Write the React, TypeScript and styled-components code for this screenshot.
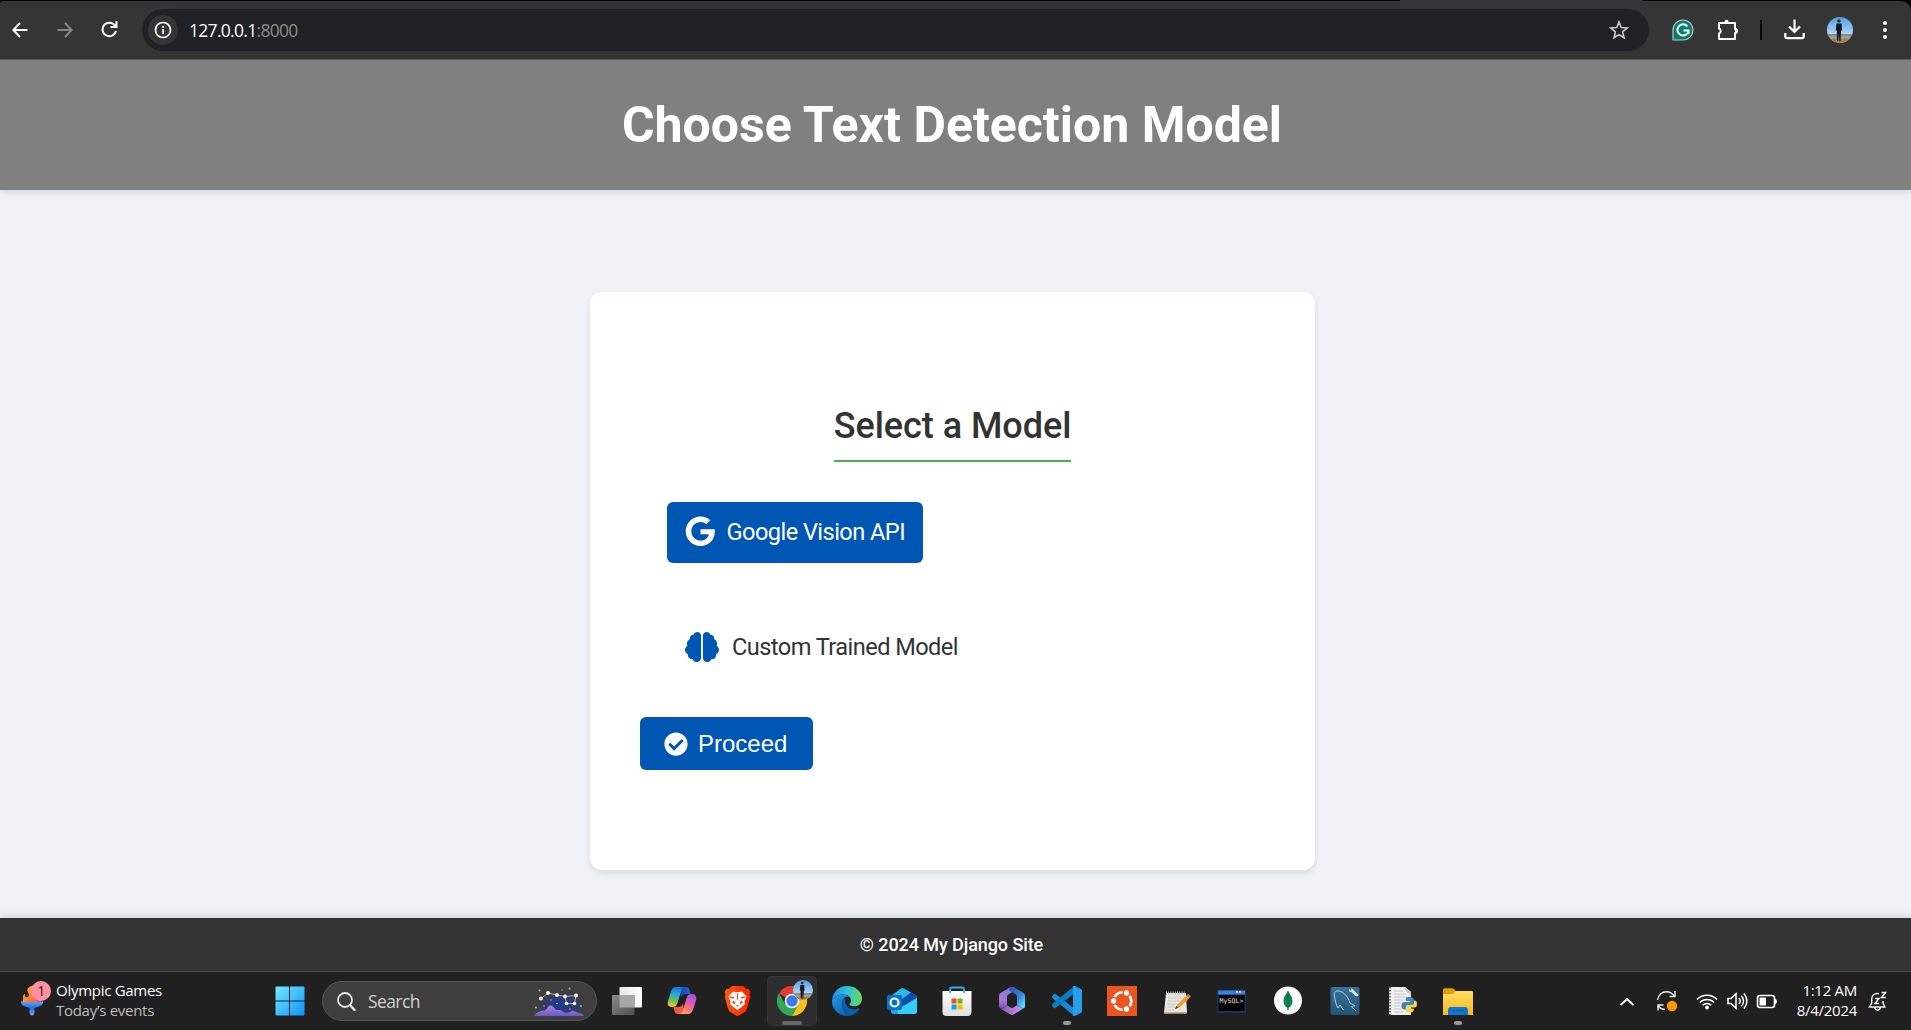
import React from 'react';
import styled, { createGlobalStyle, css } from 'styled-components';
import { FaBrain, FaCheckCircle, FaGoogle } from 'react-icons/fa';

const uiFont = '"Open Sans", "Noto Sans", sans-serif';

const GlobalStyle = createGlobalStyle`
  *, *::before, *::after { box-sizing: border-box; }
  html, body { margin: 0; padding: 0; overflow: hidden; }
  body { background: #eff3f8; font-family: Roboto, sans-serif; color: #333; }
  h1, h2, p { margin: 0; }
  svg { display: block; flex: none; }
`;

const Screen = styled.div`
  display: flex;
  flex-direction: column;
  width: 1911px;
  height: 1030px;
  overflow: hidden;
`;

/* ---------- browser toolbar ---------- */

const TabStrip = styled.div`
  flex: none;
  height: 60px;
  padding-top: 1px;
  background: linear-gradient(90deg, #000 1400px, #353535 1400px, #353535 1643px, #000 1643px);
`;

const Toolbar = styled.div`
  display: flex;
  align-items: center;
  height: 59px;
  padding: 0 0 1px 0;
  background: #353535;
  border-bottom: 1px solid #5d5d5d;
  border-radius: 3px 10px 0 0;
`;

const NavButtons = styled.div`
  flex: none;
  display: flex;
  margin-left: -3px;
  width: 145px;
`;

const NavButton = styled.div<{ $dim?: boolean }>`
  display: flex;
  align-items: center;
  justify-content: center;
  width: 45px;
  height: 40px;
  color: ${(p) => (p.$dim ? '#858585' : '#fff')};
`;

const AddressBar = styled.div`
  flex: none;
  display: flex;
  align-items: center;
  width: 1507px;
  height: 42px;
  padding: 0 20px 0 6px;
  border-radius: 21px;
  background: #202124;
`;

const SiteInfo = styled.div`
  display: flex;
  align-items: center;
  justify-content: center;
  width: 30px;
  height: 30px;
  border-radius: 50%;
  background: #353535;
`;

const Url = styled.div`
  flex: 1;
  padding: 1px 0 0 11px;
  font: 400 17.5px/24px ${uiFont};
  letter-spacing: -0.7px;
  color: #fff;

  span { color: #8b8b8b; }
`;

const Extensions = styled.div`
  display: flex;
  align-items: center;
  padding-left: 11px;
`;

const ExtensionSlot = styled.div<{ $width?: number }>`
  flex: none;
  display: flex;
  align-items: center;
  justify-content: center;
  width: ${(p) => p.$width ?? 45}px;
`;

const Divider = styled.div`
  width: 2px;
  height: 20px;
  background: #050505;
`;

/* ---------- web page ---------- */

const PageHeader = styled.header`
  flex: none;
  display: flex;
  align-items: center;
  justify-content: center;
  height: 130px;
  padding: 0 7px 0 0;
  background: #808080;
  box-shadow: 0 3px 6px rgba(0, 0, 0, 0.1);
`;

const PageTitle = styled.h1`
  font: 700 50px/60px Roboto, sans-serif;
  color: #fff;
`;

const Main = styled.main`
  flex: 1;
  display: flex;
  justify-content: center;
  padding: 102px 6px 0 0;
`;

const Card = styled.section`
  display: flex;
  flex-direction: column;
  align-items: flex-start;
  width: 725px;
  height: 578px;
  padding: 107px 50px 0;
  background: #fff;
  border-radius: 12px;
  box-shadow: 0 3px 6px rgba(0, 0, 0, 0.1);
`;

const CardTitle = styled.h2`
  align-self: center;
  height: 63px;
  border-bottom: 2px solid #4caf50;
  font: 500 36px/54px Roboto, sans-serif;
  letter-spacing: -0.04px;
  color: #333;
`;

const ModelOption = styled.label<{ $selected?: boolean }>`
  display: flex;
  align-items: center;
  height: 61px;
  margin-left: 27px;
  padding: 0 18px 2px;
  border-radius: 6px;
  font: 400 23.6px/28px Roboto, sans-serif;
  letter-spacing: -0.56px;
  ${(p) =>
    p.$selected
      ? css`
          margin-top: 40px;
          background: #0056b3;
          color: #fff;
        `
      : css`
          margin-top: 54px;
          color: #333;
          svg { color: #0056b3; }
        `}
`;

const OptionText = styled.span<{ $gap: number }>`
  margin-left: ${(p) => p.$gap}px;
`;

const ProceedButton = styled.button`
  display: flex;
  align-items: center;
  gap: 10px;
  height: 53px;
  width: 173px;
  margin-top: 39px;
  padding: 0 0 0 24px;
  border: 0;
  border-radius: 6px;
  background: #0056b3;
  color: #fff;
  font: 400 24px/28px "Liberation Sans", Arial, sans-serif;
`;

const PageFooter = styled.footer`
  flex: none;
  display: flex;
  align-items: center;
  justify-content: center;
  height: 53px;
  padding-right: 8px;
  background: #333;
  box-shadow: 0 -3px 6px rgba(0, 0, 0, 0.1);
  font: 500 18px/24px Roboto, sans-serif;
  letter-spacing: -0.08px;
  color: #fff;
`;

/* ---------- taskbar ---------- */

const Taskbar = styled.div`
  flex: none;
  display: flex;
  align-items: center;
  height: 59px;
  border-top: 1px solid #484848;
  background: #202020;
`;

const Widget = styled.div`
  display: flex;
  align-items: center;
  width: 264px;
  padding-left: 20px;
`;

const WidgetLines = styled.div`
  padding: 0 0 2px 2px;
`;

const SmallText = styled.div<{ $color?: string; $spacing?: number }>`
  font: 400 15px/20px ${uiFont};
  letter-spacing: ${(p) => p.$spacing ?? 0}px;
  color: ${(p) => p.$color ?? '#fff'};
  white-space: nowrap;
`;

const StartSlot = styled.div`
  display: flex;
  width: 58px;
  padding-left: 11px;
`;

const SearchBox = styled.div`
  display: flex;
  align-items: center;
  width: 275px;
  height: 40px;
  margin-right: 5px;
  padding: 0 11px 0 14px;
  border: 1px solid #555;
  border-radius: 20px;
  background: #3e3e3e;
`;

const SearchText = styled.div`
  flex: 1;
  padding: 0 0 0 12px;
  font: 400 17.5px/22px ${uiFont};
  letter-spacing: -0.6px;
  color: #d0d0d0;
`;

const AppSlot = styled.div<{ $active?: boolean; $before?: number }>`
  position: relative;
  display: flex;
  align-items: center;
  justify-content: center;
  width: 50px;
  height: 50px;
  margin-right: 5px;
  margin-left: ${(p) => p.$before ?? 0}px;
  border-radius: 5px;
  ${(p) =>
    p.$active &&
    css`
      background: #2e2e2e;
      box-shadow: inset 0 0 0 1px #353535;
    `}
`;

const RunningMark = styled.span<{ $wide?: boolean }>`
  position: absolute;
  bottom: 1px;
  left: ${(p) => (p.$wide ? 15 : 21)}px;
  width: ${(p) => (p.$wide ? 20 : 8)}px;
  height: 4px;
  border-radius: 2px;
  background: ${(p) => (p.$wide ? '#666' : '#9a9a9a')};
`;

const ProfileBadge = styled.span`
  position: absolute;
  top: 4px;
  left: 26px;
`;

const Tray = styled.div`
  display: flex;
  align-items: center;
  margin-left: auto;
  padding-right: 12px;
`;

const TraySlot = styled.div<{ $width: number }>`
  display: flex;
  align-items: center;
  justify-content: center;
  width: ${(p) => p.$width}px;
`;

const Clock = styled.div`
  width: 72px;
  padding-bottom: 2px;
  text-align: right;
`;

/* ---------- drawings ---------- */

const Portrait = ({ size, id }: { size: number; id: string }) => (
  <svg width={size} height={size} viewBox="0 0 26 26">
    <defs>
      <clipPath id={id}><circle cx="13" cy="13" r="13" /></clipPath>
      <linearGradient id={`${id}s`} x1="0" y1="0" x2="0" y2="1">
        <stop offset="0" stopColor="#4d9eea" /><stop offset="1" stopColor="#b5d9f7" />
      </linearGradient>
    </defs>
    <g clipPath={`url(#${id})`}>
      <rect width="26" height="18" fill={`url(#${id}s)`} />
      <rect y="17" width="26" height="3" fill="#7e8f99" />
      <rect y="19.500" width="26" height="7" fill="#b8a582" />
      <path d="M3 22l5-1 4 2 6-2 6 1v4H3z" fill="#9a8455" />
      <circle cx="12" cy="4" r="1.800" fill="#3b2b28" />
      <path d="M9.500 6.500h5l.6 7h-1l-.5 10.500h-1.300l-.4-8-.5 8h-1.400L9.800 13.500h-1z" fill="#15171f" />
    </g>
  </svg>
);

const WindowsLogo = () => (
  <svg width="30" height="30" viewBox="0 0 30 30">
    <defs>
      <linearGradient id="win" x1="0" y1="0" x2="1" y2="1" gradientUnits="objectBoundingBox">
        <stop offset="0" stopColor="#76eafe" /><stop offset="1" stopColor="#0c93fb" />
      </linearGradient>
    </defs>
    <path fill="url(#win)" d="M1.500.5H14v14H.5v-13a1 1 0 0 1 1-1zM15 .5h13.500a1 1 0 0 1 1 1v13H15zM.5 15.500H14v14H1.500a1 1 0 0 1-1-1zM15 15.500h14.500v13a1 1 0 0 1-1 1H15z" />
  </svg>
);

const Torch = () => (
  <svg width="34" height="40" viewBox="0 0 34 40">
    <defs>
      <linearGradient id="flame" x1="0" y1="0" x2="1" y2="1"><stop stopColor="#ffb51f" /><stop offset=".5" stopColor="#ff8b36" /><stop offset="1" stopColor="#f0406e" /></linearGradient>
      <linearGradient id="cup" x1="0" y1="0" x2="0" y2="1"><stop stopColor="#57adfb" /><stop offset=".5" stopColor="#2764dd" /><stop offset="1" stopColor="#6cb0f4" /></linearGradient>
    </defs>
    <path d="M3 22V16c0-2 1-3 2-3v2c2 0 4-1 2.500-5C6.500 8 9 6 11 5l8-2 2 19z" fill="url(#flame)" />
    <path d="M5 14.500c1 2 4 1 3.500-2" fill="none" stroke="#222" strokeWidth="1.300" />
    <path d="M1 20.200c6 1.500 16 1.500 22 0 .5 3-2 5-6 6l-2.500.8v4.500c0 1.500-1 3-2.500 3s-2.500-1.500-2.500-3V27L7 26.200C3 25.200.5 23.200 1 20.200z" fill="url(#cup)" />
    <circle cx="21" cy="8.500" r="10" fill="#ff929e" transform="translate(0 1.500)" />
    <text x="21.300" y="15" fontFamily='"Open Sans"' fontSize="14" textAnchor="middle" fill="#292023">1</text>
  </svg>
);

const Constellation = () => (
  <svg width="52" height="32" viewBox="0 0 52 32">
    <defs>
      <radialGradient id="sky" cx=".52" cy=".6" r=".5"><stop stopColor="#203c8d" /><stop offset=".6" stopColor="#253a82" stopOpacity=".8" /><stop offset="1" stopColor="#303a68" stopOpacity="0" /></radialGradient>
      <linearGradient id="hills" x1="0" y1="0" x2="0" y2="1"><stop stopColor="#aa88e4" /><stop offset="1" stopColor="#7157bd" /></linearGradient>
    </defs>
    <ellipse cx="27" cy="18" rx="24" ry="17" fill="url(#sky)" />
    <path d="M1 31c2-4 5-4 7-5 3 0 5-1 7-4s5-1 7 2c2 2 5 0 7 2s5 2 8 1c3-3 6 0 9 1 2 0 4 1 5 3z" fill="url(#hills)" />
    <path d="M8 13.500 15 8l9 2 8 1.500 11-1-1.500 8h-8L32 11.500" fill="none" stroke="#d3ccb5" strokeWidth=".8" />
    <g fill="#fff3d4">
      <circle cx="8" cy="13.500" r="2" /><circle cx="15" cy="8" r="2" /><circle cx="24" cy="10" r="2" /><circle cx="32" cy="11.500" r="2" /><circle cx="43" cy="10.500" r="2" /><circle cx="41.500" cy="18.500" r="1.800" /><circle cx="33.500" cy="18.500" r="1.800" />
    </g>
    <g fill="#c9ad75">
      <circle cx="6.500" cy="5.500" r="1" /><circle cx="36.500" cy="3.500" r="1" /><circle cx="29" cy="5" r=".7" /><circle cx="3" cy="22.500" r="1.100" /><circle cx="11" cy="21" r=".8" /><circle cx="18" cy="15" r=".8" /><circle cx="24" cy="18.500" r=".8" /><circle cx="48" cy="21" r="1" /><circle cx="37" cy="24" r=".8" />
    </g>
  </svg>
);

const TaskView = () => (
  <svg width="30" height="30" viewBox="0 0 30 30">
    <defs>
      <linearGradient id="tv1"><stop stopColor="#e9e9e9" /><stop offset="1" stopColor="#fff" /></linearGradient>
      <linearGradient id="tv2" x1="0" y1="0" x2="1" y2="1"><stop stopColor="#8a8a8a" /><stop offset="1" stopColor="#505050" /></linearGradient>
    </defs>
    <rect x="7.500" y="1" width="22.500" height="20.500" rx="1" fill="url(#tv1)" />
    <rect x="0" y="9" width="22.500" height="20" rx="1" fill="url(#tv2)" />
    <path d="M7.500 9h15v12.500h-15z" fill="#a7a7a7" />
  </svg>
);

const Copilot = () => (
  <svg width="30" height="30" viewBox="0 0 30 30">
    <defs>
      <linearGradient id="cp1" x1=".4" y1="0" x2=".3" y2="1"><stop stopColor="#1b6fe3" /><stop offset=".35" stopColor="#24a9d8" /><stop offset=".65" stopColor="#63bd67" /><stop offset="1" stopColor="#f7c91f" /></linearGradient>
      <linearGradient id="cp2" x1=".8" y1="0" x2=".3" y2="1"><stop stopColor="#9a55e8" /><stop offset=".4" stopColor="#dc59b2" /><stop offset=".75" stopColor="#fb7a71" /><stop offset="1" stopColor="#ffac5d" /></linearGradient>
      <linearGradient id="cp3"><stop stopColor="#1a45a8" /><stop offset="1" stopColor="#2463dc" /></linearGradient>
    </defs>
    <path d="M13 1h6c2 0 3 1 3.500 3l1 4H19c-3 0-4 1-5 4z" fill="url(#cp3)" />
    <path d="M17 28h-6c-2 0-3-1-3.500-3l-1-4H11c3 0 4-1 5-4z" fill="#f05b43" />
    <path d="M9 1h9c-2 0-3 1-3.600 3L10.500 17c-1 3-2.500 4-5 4C1 21 0 18.500 1 15L4 5.500C5 2.500 6.500 1 9 1z" fill="url(#cp1)" />
    <path d="M21 28h-9c2 0 3-1 3.600-3l4-13c1-3 2.500-4 5-4 4.400 0 5.400 3 4.400 6.500l-3 9c-1 3-2.500 4.500-5 4.500z" fill="url(#cp2)" />
  </svg>
);

const Brave = () => (
  <svg width="30" height="30" viewBox="0 0 30 30">
    <defs><linearGradient id="br"><stop stopColor="#ff5a12" /><stop offset="1" stopColor="#ff2000" /></linearGradient></defs>
    <path d="M10 0h11l3 3 2.500-.3L28.500 6l-1 2.500.8 2.500-3.300 11.500c-.6 2-1.500 3-3 4L16 30h-1l-6-3.500c-1.500-1-2.400-2-3-4L2.700 11l.8-2.500-1-2.500 2-3.300L7 3z" fill="url(#br)" />
    <path d="m11 5.500 4.500.8 4.500-.8 4.500 5-2 5 .5 2.500-4 3.400-3.500 2.600-3.500-2.600-4-3.400.5-2.500-2-5z" fill="#fff" />
    <path d="m8.500 10.200 4 1-1.500 1.500-3.500-1.200zM22.500 10.200l-4 1 1.500 1.500 3.500-1.200zM11.500 14.500l2 2-1 1.700-2.500-1.700zM19.500 14.500l-2 2 1 1.700 2.500-1.700zM13.300 19.300h4.400l-2.200 1.500zM15 7h1v6l-.5 2-.5-2z" fill="#ff4b14" />
  </svg>
);

const Chrome = () => (
  <svg width="30" height="30" viewBox="0 0 30 30">
    <path d="M15 15 2 7.500A15 15 0 0 1 28 7.500H15z" fill="#e33b2e" />
    <path d="M15 15 8.500 18.750 2 7.500A15 15 0 0 0 15 30l6.500-11.250z" fill="#34a853" />
    <path d="M15 7.500h13A15 15 0 0 1 15 30l6.500-11.250z" fill="#fbc116" />
    <circle cx="15" cy="15" r="7.300" fill="#fff" />
    <circle cx="15" cy="15" r="5.700" fill="#3979ee" />
  </svg>
);

const Edge = () => (
  <svg width="30" height="30" viewBox="0 0 30 30">
    <defs>
      <linearGradient id="ed1"><stop stopColor="#2192e8" /><stop offset=".5" stopColor="#2fbddd" /><stop offset="1" stopColor="#6be04e" /></linearGradient>
      <linearGradient id="ed2" x1="0" y1="0" x2="1" y2="1"><stop stopColor="#22a0e7" /><stop offset="1" stopColor="#0653a0" /></linearGradient>
    </defs>
    <path d="M0 14.500C.6 6 7 0 15 0c8.500 0 15 5.500 15 12.500 0 5-3.500 7.800-8 7.800-3.500 0-5-1.300-4.600-2.300.6-1 1.600-1.700 1.600-3.500 0-3-3-6-7.500-6C6.500 8.500 2 10.500 0 14.500z" fill="url(#ed1)" />
    <path d="M0 14.500C2 10.500 6.500 8.500 11.500 8.500c2 0 4 .8 5.300 2-3.300-.3-6.800 2.700-6.800 7.500 0 5 3.500 10.500 9.500 11.200-1.400.6-3 .8-4.500.8C6.500 30-.3 23 0 14.500z" fill="url(#ed2)" />
    <path d="M13.500 12.300C10 14 9 18 10.500 22c2 4.500 7 8 9.500 7.200 3.500-1.200 6-3.400 7.600-6.200.4-.7-.2-1-.8-.7C19.500 25.500 12 21 13.500 12.300z" fill="#0c5dad" />
  </svg>
);

const Outlook = () => (
  <svg width="30" height="30" viewBox="0 0 30 30">
    <path d="M4 10 13.500 3c1.500-1 3-1 4.500 0L30 10v15c0 2-1 3-3 3H7c-2 0-3-1-3-3z" fill="#26a4e5" />
    <path d="m15 2 9 5-13 8-7-5 9.500-7z" fill="#2cb8ec" />
    <path d="m24 6.500 5 3c1 .7 1 1.800.3 2.500L14 23V14z" fill="#0d4ca4" />
    <path d="m30 12-19 11v5h16c2 0 3-1 3-3z" fill="#35cdf7" />
    <rect x="0" y="9" width="15" height="15" rx="2" fill="#0871ca" />
    <circle cx="7.500" cy="16.500" r="4" fill="none" stroke="#fff" strokeWidth="2.200" />
  </svg>
);

const Store = () => (
  <svg width="30" height="30" viewBox="0 0 30 30">
    <defs><linearGradient id="st" x1="0" y1="0" x2="0" y2="1"><stop stopColor="#fff" /><stop offset="1" stopColor="#dedede" /></linearGradient></defs>
    <path d="M.5 5h29v21c0 2.500-1.500 4-4 4h-21c-2.500 0-4-1.500-4-4z" fill="url(#st)" />
    <path d="M8 7V3a1.500 1.500 0 0 1 1.500-1.500h11A1.500 1.500 0 0 1 22 3v4" fill="none" stroke="#29b4ed" strokeWidth="1.800" />
    <path d="M9.500 12.500h5v5h-5z" fill="#f25022" /><path d="M15.500 12.500h5v5h-5z" fill="#7fba00" />
    <path d="M9.500 18.500h5v5h-5z" fill="#00a4ef" /><path d="M15.500 18.500h5v5h-5z" fill="#ffb900" />
  </svg>
);

const Office = () => (
  <svg width="30" height="30" viewBox="0 0 30 30">
    <defs>
      <linearGradient id="of1" x1="0" y1="0" x2="0" y2="1"><stop stopColor="#7a79d9" /><stop offset=".6" stopColor="#a47bd8" /><stop offset="1" stopColor="#7450ad" /></linearGradient>
      <linearGradient id="of2" x1="0" y1="0" x2="1" y2="1"><stop stopColor="#324ab5" /><stop offset=".55" stopColor="#3183d6" /><stop offset=".9" stopColor="#5ddcf7" /></linearGradient>
      <linearGradient id="of3"><stop stopColor="#8550ad" /><stop offset="1" stopColor="#cb9cf0" /></linearGradient>
    </defs>
    <path d="M13 1.500 4 6.500C2.500 7.500 2 8.500 2 10v10c0 2 2 3 4 2l4-2.500v-8c0-1.500.5-2.500 2-3.500l5-3V1z" fill="url(#of1)" />
    <path d="M13 1.500c1.500-.8 2.500-.8 4 0l9 5c1.500 1 2 2 2 3.500v10c0 2-1 3-3 2l-5-3v-7.500c0-1.500-.5-2.500-2-3.500l-6-3.500z" fill="url(#of2)" />
    <path d="M3 22.500c2 .8 3 0 7-3l3.500 2c1 .5 2 .5 3 0l3.500-2.300 6 3.500-9 5.500c-1.500.9-2.500.9-4 0z" fill="url(#of3)" />
  </svg>
);

const VsCode = () => (
  <svg width="30" height="30" viewBox="0 0 30 30">
    <path d="M0 10.500c0-.4.100-.7.500-1l1.500-1.400c.5-.4 1-.4 1.500 0L22 22.300v7.500L.6 12.200c-.4-.4-.6-.8-.6-1.700z" fill="#168bd2" />
    <path d="M0 19.500c0 .4.100.7.500 1l1.500 1.400c.5.4 1 .4 1.500 0L22 7.700V.2L.6 17.800c-.4.400-.6.8-.6 1.700z" fill="#087ec5" />
    <path d="M21 0v30l2 .0 5.800-3c.8-.4 1.200-1 1.200-1.900V5c0-.9-.4-1.500-1.200-1.900L23 0z" fill="#25a0ed" />
  </svg>
);

const Ubuntu = () => (
  <svg width="30" height="30" viewBox="0 0 30 30">
    <rect width="30" height="30" fill="#e95420" />
    <circle cx="15.500" cy="15" r="8.800" fill="none" stroke="#fff" strokeWidth="2.600" />
    <g fill="#fff" stroke="#e95420" strokeWidth="1.300">
      <circle cx="6.600" cy="15" r="3.300" /><circle cx="19.500" cy="7" r="3.300" /><circle cx="19.500" cy="23" r="3.300" />
    </g>
  </svg>
);

const Notepad = () => (
  <svg width="30" height="30" viewBox="0 0 30 30">
    <path d="M4 7h20l1 20H2z" fill="#e8e8e4" /><path d="m2 26.500 22.500-.3v1.800H2z" fill="#a18a53" />
    <path d="M4 7h19" stroke="#bbb" strokeWidth="3" strokeDasharray="1 1.200" />
    <path d="M6 12h14M6 15h12M5 18h10M5 21h8M5 24h7" stroke="#c6c6c2" strokeWidth="1" />
    <path d="m15 19 10-10 3 2.500L18 21l-5 2z" fill="#f29a2a" /><path d="m25 9 1.500-1 2.500 2-.8 1.500z" fill="#d47b65" /><path d="m13 23 1.500-3 2 1.700z" fill="#5a3b1c" />
  </svg>
);

const MySqlShell = () => (
  <svg width="30" height="30" viewBox="0 0 30 30">
    <rect x="0" y="4" width="29" height="23" rx="1.500" fill="#173563" />
    <rect x="1" y="4.500" width="27" height="4" fill="#2d83e6" />
    <path d="M19 5h2v2h-2zM22 5h2v2h-2z" fill="#a6cdfa" /><path d="M25 5h2v2h-2z" fill="#e85b4a" />
    <rect x="1.500" y="9" width="26" height="16" fill="#000" />
    <text x="2.500" y="16.500" fontFamily='"DejaVu Sans Mono"' fontSize="6.500" fill="#e8e8e8" textLength="24">MySQL&gt;</text>
  </svg>
);

const Mongo = () => (
  <svg width="30" height="30" viewBox="0 0 30 30">
    <circle cx="15" cy="14.500" r="14" fill="#fafafa" />
    <path d="M15 5c1 2 4.500 5 4.500 10 0 4-2.500 6-4 7v2h-1v-2c-1.500-1-4-3-4-7 0-5 3.500-8 4.500-10z" fill="#0f8456" /><path d="M15 5v19" stroke="#075e41" strokeWidth=".7" />
  </svg>
);

const Workbench = () => (
  <svg width="30" height="30" viewBox="0 0 30 30">
    <defs><linearGradient id="wb" x1="0" y1="0" x2="0" y2="1"><stop stopColor="#38739c" /><stop offset="1" stopColor="#205474" /></linearGradient></defs>
    <rect x=".5" y="1" width="29" height="28" rx="2.500" fill="url(#wb)" />
    <path d="M8 22c-2-3-3-8-3.500-11C4 8 4.500 5 7 5c5-1 11 5 13 12 2 1 4 2 5 3-2 0-3 .2-3.500.8L26 25M8 22l2-3 3.500 5" fill="none" stroke="#b9d0de" strokeWidth="1" />
    <path d="m21.500 4 5 5" stroke="#e6edf2" strokeWidth="2.600" /><circle cx="21" cy="4.300" r="1.900" fill="#e6edf2" /><circle cx="20.500" cy="3.400" r="1" fill="#38739c" /><circle cx="27" cy="9" r="1.300" fill="#e6edf2" />
  </svg>
);

const PythonFile = () => (
  <svg width="30" height="30" viewBox="0 0 30 30">
    <path d="M1 1h16l6 5v23H1z" fill="#f0f0f0" /><path d="M2 1v28" stroke="#777" strokeWidth="2" strokeDasharray="1.500 1.500" />
    <path d="M6 5h9M6 8h12M6 11h13M6 14h9M6 17h7M6 20h7M6 23h8M6 26h9" stroke="#c7c7c7" strokeWidth="1" />
    <path d="m17 1 6 5v3c-2-2-6-2-6-8z" fill="#c6c6c6" />
    <path d="M21 11c-3 0-3.200 1-3.200 2.500V15H22v1h-5.500c-2 0-3 1.500-3 3.800s1 3.700 2.700 3.700h1.600v-2c0-1.500 1-2.500 2.500-2.500H24c1 0 2-1 2-2v-3.500c0-1.500-1.500-2.500-5-2.500z" fill="#4382ba" />
    <path d="M22 26.500c3 0 3.700-1 3.700-2.500v-1.500H21v-1h5.500c2 0 2.500-1.500 2.500-3.800s-1-3.200-2.500-3.200H26v2c0 1.500-1 2.500-2.500 2.500H20c-1.200 0-2 1-2 2v3.500c0 1.500 1 2 4 2z" fill="#fbd24e" />
  </svg>
);

const Explorer = () => (
  <svg width="30" height="30" viewBox="0 0 30 30">
    <defs><linearGradient id="fo" x1="0" y1="0" x2="0" y2="1"><stop stopColor="#ffdc62" /><stop offset="1" stopColor="#f7ba1e" /></linearGradient></defs>
    <path d="M0 4c0-1 .7-1.700 1.700-1.700H9c1 0 2 .5 3 1.700l1.500 2H30v9H0z" fill="#dfa000" />
    <path d="M0 8h10l3-3h15.500c1 0 1.500.5 1.500 1.500V29H0z" fill="url(#fo)" />
    <path d="M5 29v-4.500c0-2 1-3.500 3-3.500h14c2 0 3 1.500 3 3.500V29z" fill="#0d77d1" /><path d="M8.500 24.500h13" stroke="#09559a" />
  </svg>
);

const stroke = { fill: 'none', stroke: 'currentColor', strokeWidth: 2 } as const;

const apps: { name: string; Icon: React.FC; before?: number; running?: boolean; active?: boolean }[] = [
  { name: 'taskview', Icon: TaskView },
  { name: 'copilot', Icon: Copilot },
  { name: 'brave', Icon: Brave },
  { name: 'chrome', Icon: Chrome, active: true },
  { name: 'edge', Icon: Edge },
  { name: 'outlook', Icon: Outlook },
  { name: 'store', Icon: Store },
  { name: 'office', Icon: Office },
  { name: 'vscode', Icon: VsCode, running: true },
  { name: 'ubuntu', Icon: Ubuntu },
  { name: 'notepad', Icon: Notepad },
  { name: 'mysql', Icon: MySqlShell },
  { name: 'mongo', Icon: Mongo, before: 1 },
  { name: 'workbench', Icon: Workbench, before: 2 },
  { name: 'python', Icon: PythonFile, before: 3 },
  { name: 'explorer', Icon: Explorer, running: true },
];

function BrowserBar() {
  return (
    <TabStrip>
      <Toolbar>
        <NavButtons>
          <NavButton>
            <svg width="16" height="16" viewBox="0 0 16 16" {...stroke}><path d="M15.500 8H1.500M8 1 1.300 8 8 15" /></svg>
          </NavButton>
          <NavButton $dim>
            <svg width="16" height="16" viewBox="0 0 16 16" {...stroke}><path d="M.5 8h14M8 1l6.700 7L8 15" /></svg>
          </NavButton>
          <NavButton>
            <svg width="17" height="17" viewBox="0 0 17 17" {...stroke}><path d="M14.200 5A6.800 6.800 0 1 0 15 10M15.500 0v6H9.500" /></svg>
          </NavButton>
        </NavButtons>
        <AddressBar>
          <SiteInfo>
            <svg width="18" height="18" viewBox="0 0 18 18" fill="#fff">
              <circle cx="9" cy="9" r="7.500" fill="none" stroke="#fff" strokeWidth="1.700" />
              <path d="M8.200 8h1.700v5H8.200zM8.200 5h1.700v1.700H8.200z" />
            </svg>
          </SiteInfo>
          <Url>127.0.0.1<span>:8000</span></Url>
          <svg width="20" height="20" viewBox="0 0 20 20">
            <path d="m10 2 2.200 5.500 5.900.5-4.500 3.900L15 17.700l-5-3.100-5 3.100 1.400-5.800L1.900 8l5.900-.5z" fill="none" stroke="#c7c7c7" strokeWidth="1.600" />
          </svg>
        </AddressBar>
        <Extensions>
          <ExtensionSlot>
            <svg width="22" height="22" viewBox="0 0 22 22">
              <path d="M1 21V11A10 10 0 1 1 11 21z" fill="#087f6c" stroke="#b9c6c3" strokeWidth="1.200" />
              <path d="M15.400 7.400A5.600 5.600 0 1 0 16.600 11.500H11.500M16.500 11.500v3.500" fill="none" stroke="#fff" strokeWidth="1.900" />
            </svg>
          </ExtensionSlot>
          <ExtensionSlot>
            <svg width="22" height="22" viewBox="0 0 22 22">
              <path d="M2 4h16v6a2 2 0 0 1 0 4v6H2v-5.500a2.700 2.700 0 0 0 0-5z" fill="none" stroke="#fff" strokeWidth="2" strokeLinejoin="round" />
              <path d="M7.500 4V2.800a2 2 0 0 1 4 0V4zM18 9.500h1.200a1.800 1.800 0 0 1 0 4H18z" fill="#fff" />
            </svg>
          </ExtensionSlot>
          <ExtensionSlot $width={22}><Divider /></ExtensionSlot>
          <ExtensionSlot>
            <svg width="21" height="21" viewBox="0 0 21 21" {...stroke} stroke="#fff" strokeWidth="2.200">
              <path d="M10.500 .5v12M5 7.500l5.500 5.500L16 7.500M1.300 14v3.500c0 1 .6 1.700 1.700 1.700h15c1 0 1.700-.7 1.700-1.700V14" />
            </svg>
          </ExtensionSlot>
          <ExtensionSlot><Portrait size={26} id="user" /></ExtensionSlot>
          <ExtensionSlot>
            <svg width="4" height="18" viewBox="0 0 4 18" fill="#fff"><circle cx="2" cy="2" r="2" /><circle cx="2" cy="9" r="2" /><circle cx="2" cy="16" r="2" /></svg>
          </ExtensionSlot>
        </Extensions>
      </Toolbar>
    </TabStrip>
  );
}

function DesktopTaskbar() {
  return (
    <Taskbar>
      <Widget>
        <Torch />
        <WidgetLines>
          <SmallText $spacing={-0.28}>Olympic Games</SmallText>
          <SmallText $spacing={-0.28} $color="#bdbdbd">Today’s events</SmallText>
        </WidgetLines>
      </Widget>
      <StartSlot><WindowsLogo /></StartSlot>
      <SearchBox>
        <svg width="19" height="19" viewBox="0 0 19 19" fill="none" stroke="#e4e4e4">
          <circle cx="8" cy="8" r="7" strokeWidth="1.800" /><path d="m13 13 4.500 5" strokeWidth="2.400" strokeLinecap="round" />
        </svg>
        <SearchText>Search</SearchText>
        <Constellation />
      </SearchBox>
      {apps.map(({ name, Icon, before, running, active }) => (
        <AppSlot key={name} $active={active} $before={before}>
          <Icon />
          {active && <ProfileBadge><Portrait size={20} id="badge" /></ProfileBadge>}
          {(running || active) && <RunningMark $wide={active} />}
        </AppSlot>
      ))}
      <Tray>
        <TraySlot $width={38}>
          <svg width="16" height="9" viewBox="0 0 16 9" {...stroke} stroke="#fff"><path d="m1.500 8 6.500-6 6.500 6" /></svg>
        </TraySlot>
        <TraySlot $width={42}>
          <svg width="22" height="22" viewBox="0 0 22 22" fill="none" stroke="#eee" strokeWidth="1.400">
            <path d="M1.500 10C2 5 6 1.700 10.500 1.700c3 0 5.500 1.300 7.500 4M19 1v5.500h-5.500M9 19.500c-3 0-5-1.500-6.500-3.500M2 20.500V15h5.500" />
            <circle cx="16" cy="16" r="5.200" fill="#ff9800" stroke="none" />
          </svg>
        </TraySlot>
        <TraySlot $width={37}>
          <svg width="22" height="17" viewBox="0 0 22 17" fill="none" stroke="#fff" strokeWidth="1.600">
            <path d="M1 6.500a14 14 0 0 1 20 0M3.800 9.500a10.200 10.200 0 0 1 14.400 0M6.700 12.300a6.100 6.100 0 0 1 8.600 0" /><circle cx="11" cy="14.500" r="1.900" fill="#fff" stroke="none" />
          </svg>
        </TraySlot>
        <TraySlot $width={24}>
          <svg width="21" height="18" viewBox="0 0 21 18" fill="none" stroke="#fff" strokeWidth="1.500">
            <path d="M1 6.500h3l5-4.700v14.400l-5-4.700H1zM11.800 6a4 4 0 0 1 0 6M14.300 3.700a7.500 7.500 0 0 1 0 10.600M16.800 1.500a10.800 10.800 0 0 1 0 15" />
          </svg>
        </TraySlot>
        <TraySlot $width={36}>
          <svg width="22" height="15" viewBox="0 0 22 15">
            <rect x="1.500" y="1.500" width="17" height="12" rx="2.500" fill="none" stroke="#fff" strokeWidth="1.600" /><rect x="3.500" y="3.500" width="6.500" height="8" rx=".6" fill="#fff" /><path d="M19 5c2.500 0 2.500 5 0 5z" fill="#fff" />
          </svg>
        </TraySlot>
        <Clock>
          <SmallText $spacing={-0.28}>1:12 AM</SmallText>
          <SmallText $spacing={-0.28}>8/4/2024</SmallText>
        </Clock>
        <TraySlot $width={42}>
          <svg width="20" height="21" viewBox="0 0 20 21" fill="none" stroke="#eee" strokeWidth="1.500">
            <path d="M11 2.700C6 1.500 3.700 5 3.700 8v4L1.500 16h15.300L15 12v-2M6.800 16.500c.5 3.500 5 3.500 5.500 0M7 7.500h4L7 12.500h4.300M13.500 1.500h4l-4 5h4.300" />
          </svg>
        </TraySlot>
      </Tray>
    </Taskbar>
  );
}

export default function App() {
  return (
    <Screen>
      <GlobalStyle />
      <BrowserBar />
      <PageHeader><PageTitle>Choose Text Detection Model</PageTitle></PageHeader>
      <Main>
        <Card>
          <CardTitle>Select a Model</CardTitle>
          <ModelOption $selected>
            <FaGoogle size={30.5} />
            <OptionText $gap={11}>Google Vision API</OptionText>
          </ModelOption>
          <ModelOption>
            <FaBrain size={34} />
            <OptionText $gap={13}>Custom Trained Model</OptionText>
          </ModelOption>
          <ProceedButton>
            <FaCheckCircle size={24} />
            Proceed
          </ProceedButton>
        </Card>
      </Main>
      <PageFooter>© 2024 My Django Site</PageFooter>
      <DesktopTaskbar />
    </Screen>
  );
}
